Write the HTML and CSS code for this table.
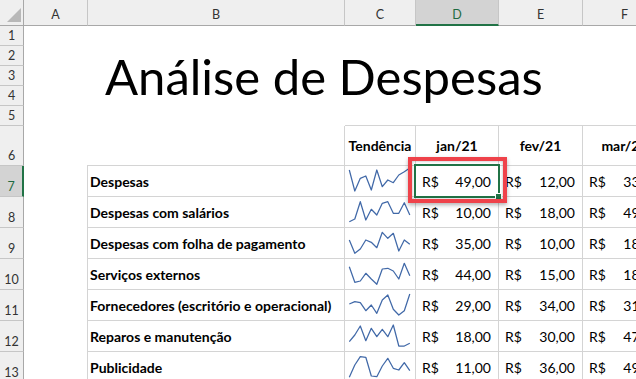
FILE: index.html
```html
<!DOCTYPE html>
<html lang="pt-BR">
<head>
<meta charset="utf-8">
<title>Análise de Despesas</title>
<link rel="stylesheet" href="styles.css">
</head>
<body>
<div class="sheet">
  <div class="corner"><span class="tri"></span></div>
  <div class="colhdr">A</div>
  <div class="colhdr">B</div>
  <div class="colhdr">C</div>
  <div class="colhdr sel">D</div>
  <div class="colhdr">E</div>
  <div class="colhdr">F</div>

  <div class="rowhdr r1">1</div>
  <div class="rowhdr r2">2</div>
  <div class="rowhdr r3">3</div>
  <div class="rowhdr r4">4</div>
  <div class="rowhdr r5">5</div>
  <div class="rowhdr r6">6</div>
  <div class="rowhdr r7 sel">7</div>
  <div class="rowhdr r8">8</div>
  <div class="rowhdr r9">9</div>
  <div class="rowhdr r10">10</div>
  <div class="rowhdr r11">11</div>
  <div class="rowhdr r12">12</div>
  <div class="rowhdr r13">13</div>

  <div class="title">Análise de Despesas</div>

  <div class="cell blank6 r6"></div>
  <div class="cell head r6 cC">Tendência</div>
  <div class="cell head r6 cD">jan/21</div>
  <div class="cell head r6 cE">fev/21</div>
  <div class="cell head r6 cF">mar/21</div>

  <div class="cell label r7">Despesas</div>
  <div class="cell spark r7"><svg viewBox="0 0 70 30" width="70" height="30"><polyline points="4.3,4 9.8,25 15.3,12.3 20.8,10 26.3,24 31.8,4 37.3,20.7 42.8,14 48.3,16.7 53.8,9 59.3,5.7 64.8,2"/></svg></div>
  <div class="cell money r7 cD"><span>R$</span><span>49,00</span></div>
  <div class="cell money r7 cE"><span>R$</span><span>12,00</span></div>
  <div class="cell money r7 cF"><span>R$</span><span>33,00</span></div>

  <div class="cell label r8">Despesas com salários</div>
  <div class="cell spark r8"><svg viewBox="0 0 70 30" width="70" height="30"><polyline points="4.3,24.7 9.8,22 15.3,4.7 20.8,23 26.3,12.3 31.8,18 37.3,6.3 42.8,4.7 48.3,16.3 53.8,16.3 59.3,5.7 64.8,18"/></svg></div>
  <div class="cell money r8 cD"><span>R$</span><span>10,00</span></div>
  <div class="cell money r8 cE"><span>R$</span><span>18,00</span></div>
  <div class="cell money r8 cF"><span>R$</span><span>49,00</span></div>

  <div class="cell label r9">Despesas com folha de pagamento</div>
  <div class="cell spark r9"><svg viewBox="0 0 70 30" width="70" height="30"><polyline points="4.3,12 9.8,25.3 15.3,21 20.8,12 26.3,14.3 31.8,19.7 37.3,4.3 42.8,10.3 48.3,5.3 53.8,23 59.3,12 64.8,16.3"/></svg></div>
  <div class="cell money r9 cD"><span>R$</span><span>35,00</span></div>
  <div class="cell money r9 cE"><span>R$</span><span>10,00</span></div>
  <div class="cell money r9 cF"><span>R$</span><span>18,00</span></div>

  <div class="cell label r10">Serviços externos</div>
  <div class="cell spark r10"><svg viewBox="0 0 70 30" width="70" height="30"><polyline points="4.3,7.7 9.8,23.3 15.3,22 20.8,14.3 26.3,20 31.8,25.3 37.3,10 42.8,9.3 48.3,12 53.8,20 59.3,4.3 64.8,16.7"/></svg></div>
  <div class="cell money r10 cD"><span>R$</span><span>44,00</span></div>
  <div class="cell money r10 cE"><span>R$</span><span>15,00</span></div>
  <div class="cell money r10 cF"><span>R$</span><span>18,00</span></div>

  <div class="cell label r11">Fornecedores (escritório e operacional)</div>
  <div class="cell spark r11"><svg viewBox="0 0 70 30" width="70" height="30"><polyline points="4.3,14 9.8,11.7 15.3,12.7 20.8,20.7 26.3,15 31.8,23.3 37.3,10 42.8,5 48.3,19.3 53.8,25 59.3,20.7 64.8,4"/></svg></div>
  <div class="cell money r11 cD"><span>R$</span><span>29,00</span></div>
  <div class="cell money r11 cE"><span>R$</span><span>34,00</span></div>
  <div class="cell money r11 cF"><span>R$</span><span>31,00</span></div>

  <div class="cell label r12">Reparos e manutenção</div>
  <div class="cell spark r12"><svg viewBox="0 0 70 30" width="70" height="30"><polyline points="4.3,20.7 9.8,14 15.3,5 20.8,19.7 26.3,7.3 31.8,15.7 37.3,8.3 42.8,15.7 48.3,4 53.8,25 59.3,25 64.8,22.3"/></svg></div>
  <div class="cell money r12 cD"><span>R$</span><span>18,00</span></div>
  <div class="cell money r12 cE"><span>R$</span><span>30,00</span></div>
  <div class="cell money r12 cF"><span>R$</span><span>47,00</span></div>

  <div class="cell label r13">Publicidade</div>
  <div class="cell spark r13"><svg viewBox="0 0 70 30" width="70" height="30"><polyline points="4.3,25.3 9.8,13 15.3,4.7 20.8,5.3 26.3,24 31.8,24.7 37.3,14 42.8,6.3 48.3,16.3 53.8,18 59.3,10.7 64.8,18.7"/></svg></div>
  <div class="cell money r13 cD"><span>R$</span><span>11,00</span></div>
  <div class="cell money r13 cE"><span>R$</span><span>36,00</span></div>
  <div class="cell money r13 cF"><span>R$</span><span>49,00</span></div>

  <div class="selection"><span class="handle"></span></div>
  <div class="callout"></div>
</div>
</body>
</html>
```

FILE: styles.css
```css
html, body {
  margin: 0;
  padding: 0;
  background: #ffffff;
  overflow: hidden;
}

.sheet {
  position: relative;
  display: grid;
  grid-template-columns: 24px 64px 257px 71px 83px 84px 84px;
  grid-template-rows: 26px repeat(5, 20px) 40px repeat(7, 31px);
  width: 667px;
  font-family: Lato, "Open Sans", sans-serif;
  color: #000;
}

.corner {
  grid-row: 1;
  grid-column: 1;
  background: #efefef;
  border-right: 1px solid #a8a8a8;
  border-bottom: 1px solid #a8a8a8;
  box-sizing: border-box;
  position: relative;
}
.tri {
  position: absolute;
  left: 7px;
  top: 8px;
  width: 14px;
  height: 14px;
  background: #b8b8b8;
  clip-path: polygon(100% 0, 100% 100%, 0 100%);
}

.colhdr {
  grid-row: 1;
  background: #efefef;
  border-right: 1px solid #c6c6c6;
  border-bottom: 1px solid #a8a8a8;
  box-sizing: border-box;
  display: flex;
  justify-content: center;
  align-items: center;
  padding-top: 4px;
  font-size: 12.5px;
  color: #333;
}
.colhdr.sel {
  background: #d3d3d3;
  border-bottom: 2px solid #217346;
  color: #1d6a40;
}

.rowhdr {
  grid-column: 1;
  background: #efefef;
  border-right: 1px solid #a8a8a8;
  border-bottom: 1px solid #c6c6c6;
  box-sizing: border-box;
  display: flex;
  justify-content: center;
  align-items: flex-end;
  padding-bottom: 2px;
  font-size: 12.5px;
  line-height: 14px;
  color: #333;
}
.rowhdr.sel {
  background: #d3d3d3;
  border-right: 2px solid #217346;
  color: #1d6a40;
}

.r1 { grid-row: 2; }
.r2 { grid-row: 3; }
.r3 { grid-row: 4; }
.r4 { grid-row: 5; }
.r5 { grid-row: 6; }
.r6 { grid-row: 7; }
.r7 { grid-row: 8; }
.r8 { grid-row: 9; }
.r9 { grid-row: 10; }
.r10 { grid-row: 11; }
.r11 { grid-row: 12; }
.r12 { grid-row: 13; }
.r13 { grid-row: 14; }

.cC { grid-column: 4; }
.cD { grid-column: 5; }
.cE { grid-column: 6; }
.cF { grid-column: 7; }

.title {
  grid-column: 3 / 8;
  grid-row: 3 / 6;
  align-self: end;
  padding: 0 0 5px 17px;
  font-size: 49px;
  line-height: 49px;
  font-weight: 400;
  white-space: nowrap;
}

.cell {
  box-sizing: border-box;
  border-right: 1px solid #d4d4d4;
  border-bottom: 1px solid #d4d4d4;
  display: flex;
  align-items: center;
  padding-top: 1px;
  font-size: 14px;
  line-height: 1;
  white-space: nowrap;
  overflow: hidden;
}

.blank6 {
  grid-column: 3;
}

.head {
  justify-content: center;
  font-weight: 700;
  box-shadow: 0 -1px 0 #d4d4d4;
  overflow: visible;
}

.label {
  grid-column: 3;
  padding-left: 2px;
  font-weight: 700;
  box-shadow: -1px 0 0 #d4d4d4, -1px -1px 0 #d4d4d4;
  overflow: visible;
}

.spark {
  grid-column: 4;
  padding-top: 0;
}
.spark svg {
  display: block;
}
.spark polyline {
  fill: none;
  stroke: #4169a8;
  stroke-width: 1.25;
  stroke-linejoin: round;
}

.money {
  justify-content: space-between;
  padding: 1px 7px 0 6px;
}

.selection {
  position: absolute;
  left: 414px;
  top: 164px;
  width: 86px;
  height: 34px;
  box-sizing: border-box;
  border: 2px solid #217346;
}
.handle {
  position: absolute;
  right: -4px;
  bottom: -4px;
  width: 5px;
  height: 5px;
  background: #217346;
  border: 1px solid #ffffff;
}

.callout {
  position: absolute;
  left: 408px;
  top: 157px;
  width: 99px;
  height: 46px;
  box-sizing: border-box;
  border: 4px solid #ef424a;
  box-shadow: 0 2px 4px rgba(0, 0, 0, 0.3), inset 0 0 3px rgba(0, 0, 0, 0.3);
}
```
